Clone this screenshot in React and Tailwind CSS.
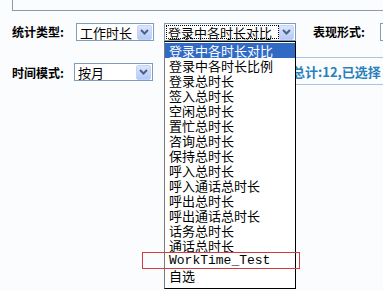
import React from "react";

const options = [
  "登录中各时长对比",
  "登录中各时长比例",
  "登录总时长",
  "签入总时长",
  "空闲总时长",
  "置忙总时长",
  "咨询总时长",
  "保持总时长",
  "呼入总时长",
  "呼入通话总时长",
  "呼出总时长",
  "呼出通话总时长",
  "话务总时长",
  "通话总时长",
  "WorkTime_Test",
  "自选",
];

function Arrow() {
  return (
    <div className="flex h-[15px] w-[15px] shrink-0 items-center justify-center rounded-[2px] border border-[#c3d3fd] bg-gradient-to-b from-[#dce6fd] to-[#b5c9f6]">
      <svg width="9" height="6" viewBox="0 0 9 6">
        <path d="M1 1 L4.5 4.5 L8 1" stroke="#4d6185" strokeWidth="2" fill="none" />
      </svg>
    </div>
  );
}

function Select({ text, width, focused }) {
  return (
    <div
      className={`flex h-[18px] shrink-0 items-center border border-[#7f9db9] bg-white pl-[1px] pr-[1px] ${width}`}
    >
      <div
        className={`flex h-[14px] flex-1 items-center whitespace-nowrap pl-[2px] text-[13px] leading-none ${
          focused ? "outline outline-1 outline-dotted outline-black -outline-offset-1" : ""
        }`}
      >
        {text}
      </div>
      <Arrow />
    </div>
  );
}

export default function App() {
  return (
    <div className="relative h-[291px] w-[383px] overflow-hidden bg-[#fbfcfe] font-['Noto_Sans_CJK_SC',sans-serif] text-black">
      {/* kader gore */}
      <div className="ml-3 h-[11px] border-b border-l border-[#8f9aa6]" />

      {/* red 1 */}
      <div className="mt-3 flex h-[18px] w-[420px] items-center">
        <span className="ml-3 w-[64px] shrink-0 whitespace-nowrap text-[12px] font-bold leading-none">统计类型:</span>
        <Select text="工作时长" width="w-[78px]" />
        <div className="ml-[10px] shrink-0">
          <Select text="登录中各时长对比" width="w-[132px]" focused />
        </div>
        <span className="ml-[17px] w-[54px] shrink-0 whitespace-nowrap text-[12px] font-bold leading-none">表现形式:</span>
        <div className="ml-[13px] h-[18px] w-[20px] shrink-0 border border-[#7f9db9] bg-white" />
      </div>

      {/* red 2 */}
      <div className="mt-[16px] flex h-[28px]">
        <span className="ml-3 mt-[10px] w-[62px] shrink-0 whitespace-nowrap text-[12px] font-bold leading-none">时间模式:</span>
        <div className="mt-[6px] shrink-0">
          <Select text="按月" width="w-[79px]" />
        </div>
        <div className="ml-auto flex w-[96px] shrink-0 items-center whitespace-nowrap border-b border-t border-[#a9c4dc] pl-[5px] text-[13px] font-bold leading-none text-[#2a80b9]">
          总计:12,已选择
        </div>
      </div>

      {/* otvorena lista */}
      <div className="absolute left-[164px] top-[41px] h-[248px] w-[132px] border border-black border-l-[#7a7a7a] bg-white pt-[1px]">
        {options.map((o, i) => (
          <div
            key={o}
            className={`h-[15px] whitespace-nowrap pl-[4px] text-[13px] leading-[15px] ${
              i === 0 ? "bg-[#316ac5] text-white" : ""
            } ${o === "WorkTime_Test" ? "font-['Liberation_Mono',monospace] text-[11.4px]" : ""}`}
          >
            {o}
          </div>
        ))}
      </div>

      {/* crveni okvir */}
      <div className="absolute left-[142px] top-[252px] h-[17px] w-[158px] border border-[#d23c3c]" />
    </div>
  );
}
